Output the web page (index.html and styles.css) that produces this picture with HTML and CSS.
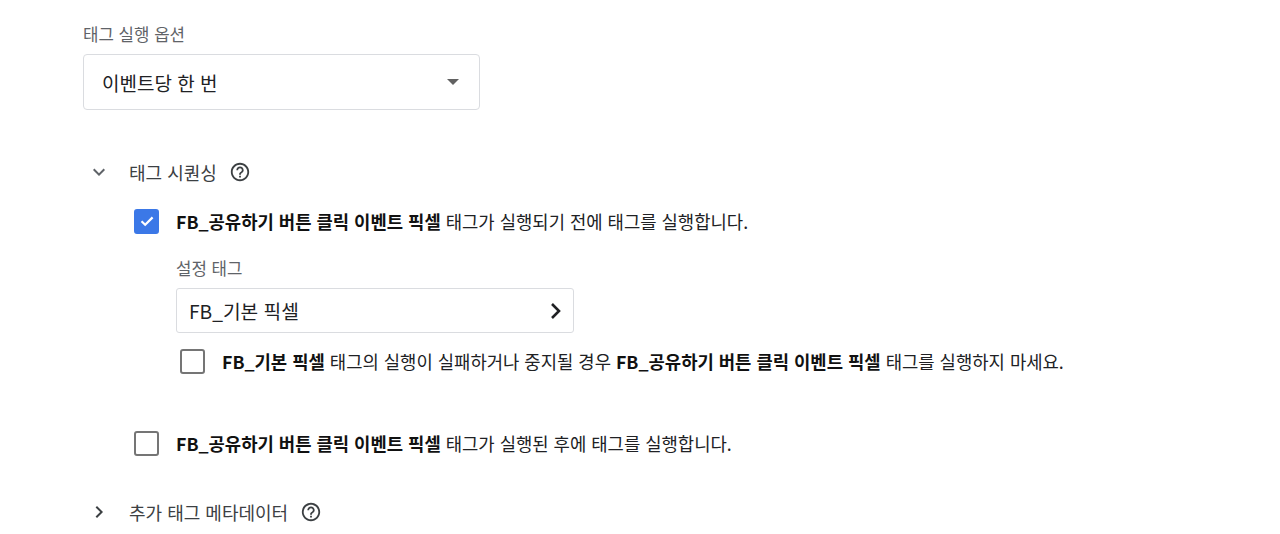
FILE: index.html
```html
<!DOCTYPE html>
<html lang="ko">
<head>
<meta charset="utf-8">
<link rel="stylesheet" href="styles.css">
</head>
<body>
<div class="page">
  <div class="field-label">태그 실행 옵션</div>
  <div class="select">
    <span class="select-text">이벤트당 한 번</span>
    <svg class="select-arrow" width="12" height="6" viewBox="0 0 12 6"><path d="M0 0h12L6 6z" fill="#616161"/></svg>
  </div>

  <div class="section-head seq-head">
    <svg class="chev" width="24" height="24" viewBox="0 0 24 24"><path d="M7.41 8.59 12 13.17l4.59-4.58L18 10l-6 6-6-6z" fill="#5f6368"/></svg>
    <span class="section-title">태그 시퀀싱</span>
    <svg class="help" width="22" height="22" viewBox="0 0 24 24"><path d="M11 18h2v-2h-2v2zm1-16C6.48 2 2 6.48 2 12s4.48 10 10 10 10-4.48 10-10S17.52 2 12 2zm0 18c-4.41 0-8-3.59-8-8s3.59-8 8-8 8 3.59 8 8-3.59 8-8 8zm0-14c-2.21 0-4 1.790-4 4h2c0-1.1.9-2 2-2s2 .9 2 2c0 2-3 1.75-3 5h2c0-2.25 3-2.5 3-5 0-2.21-1.79-4-4-4z" fill="#3c4043"/></svg>
  </div>

  <div class="seq-body">
    <div class="check-row first-row">
      <span class="cb checked">
        <svg width="18" height="18" viewBox="0 0 18 18"><path d="M3.5 9.2 7.2 12.8 14.6 5.4" fill="none" stroke="#fff" stroke-width="2.2"/></svg>
      </span>
      <span class="check-text"><b>FB_공유하기 버튼 클릭 이벤트 픽셀</b> 태그가 실행되기 전에 태그를 실행합니다.</span>
    </div>

    <div class="setup">
      <div class="field-label">설정 태그</div>
      <div class="tag-box">
        <span class="tag-text">FB_기본 픽셀</span>
        <svg width="12" height="18" viewBox="0 0 12 18"><path d="M2 2l7 7-7 7" fill="none" stroke="#202124" stroke-width="2.6"/></svg>
      </div>
      <div class="check-row sub-row">
        <span class="cb"></span>
        <span class="check-text"><b>FB_기본 픽셀</b> 태그의 실행이 실패하거나 중지될 경우 <b>FB_공유하기 버튼 클릭 이벤트 픽셀</b> 태그를 실행하지 마세요.</span>
      </div>
    </div>

    <div class="check-row after-row">
      <span class="cb"></span>
      <span class="check-text"><b>FB_공유하기 버튼 클릭 이벤트 픽셀</b> 태그가 실행된 후에 태그를 실행합니다.</span>
    </div>
  </div>

  <div class="section-head meta-head">
    <svg class="chev" width="24" height="24" viewBox="0 0 24 24"><path d="M8.59 16.59 13.17 12 8.59 7.41 10 6l6 6-6 6z" fill="#3c4043"/></svg>
    <span class="section-title">추가 태그 메타데이터</span>
    <svg class="help" width="22" height="22" viewBox="0 0 24 24"><path d="M11 18h2v-2h-2v2zm1-16C6.48 2 2 6.48 2 12s4.48 10 10 10 10-4.48 10-10S17.52 2 12 2zm0 18c-4.41 0-8-3.59-8-8s3.59-8 8-8 8 3.59 8 8-3.59 8-8 8zm0-14c-2.21 0-4 1.79-4 4h2c0-1.1.9-2 2-2s2 .9 2 2c0 2-3 1.75-3 5h2c0-2.25 3-2.5 3-5 0-2.210-1.79-4-4-4z" fill="#3c4043"/></svg>
  </div>
</div>
</body>
</html>
```

FILE: styles.css
```css
* { box-sizing: border-box; }
html, body { margin: 0; padding: 0; background: #fff; }
body {
  font-family: "Noto Sans CJK KR", "Noto Sans", Roboto, sans-serif;
  color: #202124;
  width: 1280px;
  height: 534px;
  overflow: hidden;
}
.page { padding: 23px 0 0 83px; }

.field-label {
  font-size: 16.8px;
  line-height: 22px;
  color: #5f6368;
}
.select {
  margin-top: 9px;
  width: 397px;
  height: 56px;
  border: 1px solid #dadce0;
  border-radius: 4px;
  display: flex;
  align-items: center;
  justify-content: space-between;
  padding: 0 20px 0 18px;
}
.select-text { font-size: 19px; color: #202124; }

.section-head {
  display: flex;
  align-items: center;
  height: 30px;
}
.seq-head { margin-top: 47px; }
.chev { margin-left: 4px; }
.section-title {
  margin-left: 18px;
  font-size: 18px;
  line-height: 30px;
  color: #3c4043;
}
.help { margin-left: 12px; }

.seq-body { padding-left: 51px; }

.check-row {
  display: flex;
  align-items: center;
  height: 26px;
}
.first-row { margin-top: 21px; }
.cb {
  flex: none;
  width: 25px;
  height: 25px;
  border: 2px solid #757575;
  border-radius: 3px;
  display: flex;
  align-items: center;
  justify-content: center;
}
.cb.checked {
  background: #3b78e7;
  border-color: #3b78e7;
}
.check-text {
  margin-left: 17px;
  font-size: 17.75px;
  line-height: 26px;
  color: #202124;
  white-space: nowrap;
}
.check-text b { font-weight: 700; color: #111; }

.setup { padding-left: 42px; margin-top: 23px; }
.tag-box {
  margin-top: 9px;
  width: 398px;
  height: 45px;
  border: 1px solid #dadce0;
  border-radius: 3px;
  display: flex;
  align-items: center;
  justify-content: space-between;
  padding: 0 11px 0 12px;
}
.tag-text { font-size: 19.2px; }

.sub-row { margin-top: 15px; padding-left: 4px; }

.after-row { margin-top: 56px; }

.meta-head { margin-top: 41px; }
```
